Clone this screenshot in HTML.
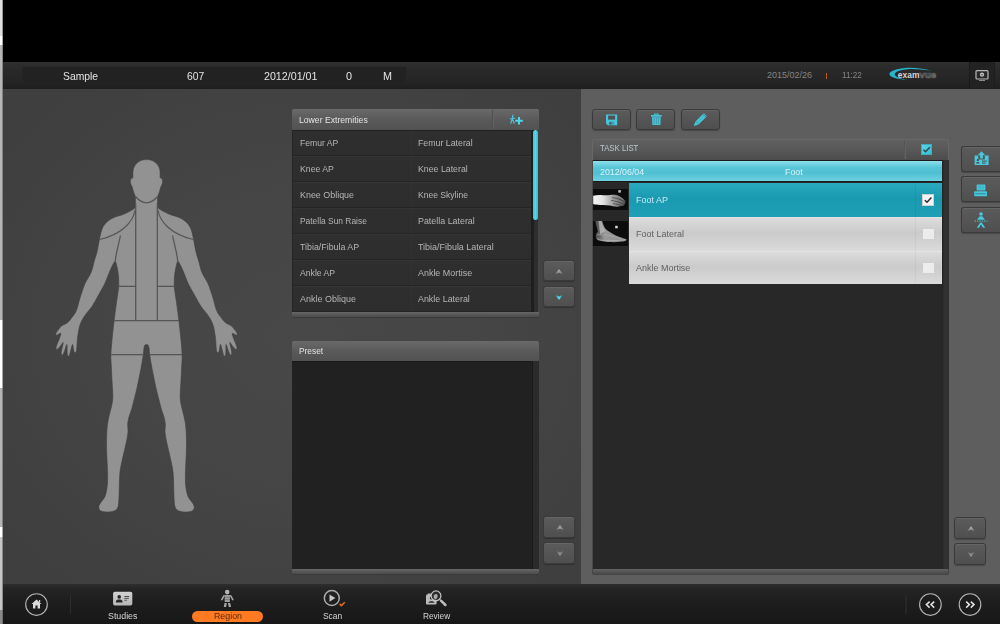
<!DOCTYPE html>
<html>
<head>
<meta charset="utf-8">
<title>Region</title>
<style>
html,body{margin:0;padding:0;}
html{width:1000px;height:624px;overflow:hidden;}
body{width:1000px;height:624px;overflow:hidden;background:#000;position:relative;font-family:"Liberation Sans",sans-serif;font-size:10px;color:#ddd;}
.abs{position:absolute;}
.sx{display:inline-block;transform-origin:0 50%;}
div{box-sizing:border-box;}
#strip{left:0;top:0;width:3px;height:624px;}
#topblack{left:3px;top:0;width:997px;height:62px;background:#000;}
#hdr{left:3px;top:62px;width:997px;height:26.5px;background:linear-gradient(#2f2f2f,#292929 30%,#252525 70%,#1e1e1e);}
#pinfo{left:22.8px;top:67.2px;width:383px;height:16.4px;background:#222;}
.ht{position:absolute;top:69.5px;font-size:11px;line-height:13px;color:#e4e4e4;white-space:nowrap;}
#leftbg{left:3px;top:89px;width:578px;height:495px;background:radial-gradient(ellipse 64% 64% at 52% 50%,#484848 0%,#454545 50%,#3f3f3f 100%);}
#rightbg{left:581px;top:89px;width:419px;height:495px;background:#5e5e5e;}
#botbar{left:3px;top:584.4px;width:997px;height:40px;background:linear-gradient(#2e2e2e,#242424 12%,#1e1e1e 45%,#171717);}
.phead{position:absolute;height:21px;background:linear-gradient(#6a6a6a,#5a5a5a 50%,#525252);border-radius:2px 2px 0 0;color:#e4e4e4;font-size:9.5px;line-height:21px;padding-left:7px;white-space:nowrap;}
.pfoot{position:absolute;height:6px;background:linear-gradient(#686868,#595959 45%,#4c4c4c);border-radius:0 0 2px 2px;border-bottom:1px solid #3a3a3a;}
.row{position:absolute;left:292px;width:239px;height:26px;background:linear-gradient(#2f2f2f,#2d2d2d);border-bottom:1px solid #252525;border-top:1px solid #343434;color:#b6b6b6;font-size:9.5px;line-height:24.5px;white-space:nowrap;}
.row i{position:absolute;left:119px;top:0;width:1px;height:24px;background:rgba(255,255,255,.018);}
.row span{position:absolute;top:0;}
.btn{position:absolute;background:linear-gradient(#5b5b5b,#4f4f4f);border:1px solid #3a3a3a;border-radius:3px;box-shadow:inset 0 1px 0 rgba(255,255,255,.07),0 1px 1px rgba(0,0,0,.25);}
.nav{position:absolute;top:610.4px;font-size:9.7px;line-height:12px;color:#d6d6d6;text-align:center;white-space:nowrap;}
</style>
</head>
<body>
<svg width="0" height="0" style="position:absolute"><defs>
<linearGradient id="gup" x1="0" y1="0" x2="0" y2="1"><stop offset="0" stop-color="#b4b4b4"/><stop offset="1" stop-color="#808080"/></linearGradient>
<linearGradient id="gdn" x1="0" y1="0" x2="0" y2="1"><stop offset="0" stop-color="#6a6a6a"/><stop offset="1" stop-color="#a8a8a8"/></linearGradient>
<linearGradient id="gdc" x1="0" y1="0" x2="0" y2="1"><stop offset="0" stop-color="#2f93a4"/><stop offset=".5" stop-color="#4fd4e8"/><stop offset="1" stop-color="#58dcf0"/></linearGradient>
</defs></svg>
<div id="topblack" class="abs"></div>
<div id="hdr" class="abs"></div>
<div id="pinfo" class="abs"></div>
<div id="leftbg" class="abs"></div>
<div id="rightbg" class="abs"></div>
<div id="botbar" class="abs"></div>

<!-- header text -->
<div class="ht" style="left:63px;"><span class="sx" style="transform:scaleX(.94)">Sample</span></div>
<div class="ht" style="left:187px;"><span class="sx" style="transform:scaleX(.94)">607</span></div>
<div class="ht" style="left:264px;"><span class="sx" style="transform:scaleX(.97)">2012/01/01</span></div>
<div class="ht" style="left:346px;"><span class="sx" style="transform:scaleX(.98)">0</span></div>
<div class="ht" style="left:383px;"><span class="sx" style="transform:scaleX(.98)">M</span></div>
<div class="ht" style="left:767px;font-size:9px;color:#858585;top:69.2px;"><span class="sx" style="transform:scaleX(1)">2015/02/26</span></div>
<div class="abs" style="left:825.6px;top:72.7px;width:1.2px;height:6.8px;background:#b8591d;"></div>
<div class="ht" style="left:842px;font-size:9px;color:#858585;top:69.2px;"><span class="sx" style="transform:scaleX(.91)">11:22</span></div>
<!-- logo -->
<svg class="abs" style="left:888px;top:66px;" width="52" height="18" viewBox="0 0 52 18">
  <defs><filter id="lb"><feGaussianBlur stdDeviation=".35"/></filter></defs>
  <path filter="url(#lb)" d="M45 5.4 C36 2.4 24 1.2 15 2.2 C6 3.4 1.4 5.6 1.4 8 C1.4 11 8 13.4 19.6 13.6 C12 12.6 6.8 10.8 6.8 8.2 C6.8 5.6 12 3.8 20 3.2 C28 2.8 38 3.8 45 5.4 Z" fill="#25b4cb"/>
  <text x="9.8" y="11.8" font-family="Liberation Sans, sans-serif" font-weight="bold" font-size="9.5" fill="#d4d4d4" textLength="21.6" lengthAdjust="spacingAndGlyphs">exam</text>
  <text x="31.6" y="11.8" font-family="Liberation Sans, sans-serif" font-weight="bold" font-size="9.5" fill="#2c2c2c" stroke="#6e6e6e" stroke-width=".7" textLength="16.6" lengthAdjust="spacingAndGlyphs">vue</text>
</svg>
<div class="abs" style="left:969px;top:62px;width:26px;height:26px;background:#222;border-left:1px solid #1a1a1a;border-right:1px solid #1d1d1d;"></div>
<svg class="abs" style="left:975px;top:69px;" width="14" height="13" viewBox="0 0 14 13">
  <rect x="1" y="1.6" width="12" height="8.4" rx="1" fill="#2a2a2a" stroke="#b8b8b8" stroke-width="1.2"/>
  <circle cx="7" cy="5.7" r="2.1" fill="#c4c4c4"/>
  <circle cx="7" cy="5.7" r=".7" fill="#333"/>
  <rect x="4" y="11" width="6" height="1" fill="#8c8c8c"/>
</svg>

<!-- Lower Extremities panel -->
<div class="abs" style="left:292px;top:130px;width:246px;height:182px;background:#1e1e1e;"></div>
<div class="abs" style="left:534px;top:130px;width:4px;height:182px;background:#2e2e2e;"></div>
<div class="phead" style="left:292px;top:109px;width:246.6px;"><span class="sx" style="transform:scaleX(.91)">Lower Extremities</span></div>
<div class="abs" style="left:492px;top:110px;width:2px;height:19px;background:#4e4e4e;border-right:1px solid #646464;"></div>
<svg class="abs" style="left:509px;top:114px;" width="16" height="12" viewBox="0 0 16 12" id="addicon">
  <g fill="none" stroke="#49c9de" stroke-width="1.15" stroke-linecap="round">
    <path d="M3.9 1 L3.5 3.6 M1.2 4.7 L5.9 4.2 M3.4 4.4 L1.8 9.2 M3.6 5.4 L5.2 9.2"/>
  </g>
  <path d="M9 3 h2 v2.7 h2.8 v2 h-2.8 v2.7 h-2 v-2.7 h-2.8 v-2 h2.8 z" fill="#4fd4e8"/>
</svg>
<div class="row" style="top:130px;border-top-color:#202020;"><i></i><span class="sx" style="left:7.5px;transform:scaleX(0.905)">Femur AP</span><span class="sx" style="left:126px;transform:scaleX(0.925)">Femur Lateral</span></div>
<div class="row" style="top:156px;"><i></i><span class="sx" style="left:7.5px;transform:scaleX(0.915)">Knee AP</span><span class="sx" style="left:126px;transform:scaleX(0.923)">Knee Lateral</span></div>
<div class="row" style="top:182px;"><i></i><span class="sx" style="left:7.5px;transform:scaleX(.938)">Knee Oblique</span><span class="sx" style="left:126px;transform:scaleX(0.9)">Knee Skyline</span></div>
<div class="row" style="top:208px;"><i></i><span class="sx" style="left:7.5px;transform:scaleX(0.885)">Patella Sun Raise</span><span class="sx" style="left:126px;transform:scaleX(0.935)">Patella Lateral</span></div>
<div class="row" style="top:234px;"><i></i><span class="sx" style="left:7.5px;transform:scaleX(0.93)">Tibia/Fibula AP</span><span class="sx" style="left:126px;transform:scaleX(0.94)">Tibia/Fibula Lateral</span></div>
<div class="row" style="top:260px;"><i></i><span class="sx" style="left:7.5px;transform:scaleX(0.909)">Ankle AP</span><span class="sx" style="left:126px;transform:scaleX(0.94)">Ankle Mortise</span></div>
<div class="row" style="top:286px;"><i></i><span class="sx" style="left:7.5px;transform:scaleX(0.945)">Ankle Oblique</span><span class="sx" style="left:126px;transform:scaleX(0.935)">Ankle Lateral</span></div>
<div class="abs" style="left:532.5px;top:130px;width:5px;height:90px;background:linear-gradient(90deg,#3fc0d6,#56d6ea 50%,#3ab4ca);border-radius:2.5px;"></div>
<div class="abs" style="left:292px;top:130px;width:1px;height:182px;background:#242424;"></div>
<div class="pfoot" style="left:292px;top:312px;width:246.6px;"></div>
<div class="btn" style="left:543px;top:259.5px;width:31.5px;height:21.5px;"></div>
<div class="btn" style="left:543px;top:285.5px;width:31.5px;height:21.5px;"></div>
<svg class="abs" style="left:554.4px;top:267.7px;" width="10" height="7" viewBox="0 0 10 7"><path d="M1.4 6 L5 1 L8.6 6 L5 4.7 Z" fill="url(#gup)"/></svg>
<svg class="abs" style="left:554.4px;top:293.6px;" width="10" height="7" viewBox="0 0 10 7"><path d="M1.4 1 L5 6 L8.6 1 L5 2.2 Z" fill="url(#gdc)"/></svg>

<!-- Preset panel -->
<div class="abs" style="left:292px;top:360px;width:246.8px;height:209px;background:#212121;border-top:2px solid #1a1a1a;"></div>
<div class="abs" style="left:532px;top:360px;width:6.8px;height:209px;background:#2b2b2b;border-left:1px solid #1b1b1b;"></div>
<div class="phead" style="left:292px;top:340.5px;width:246.8px;height:20.5px;line-height:20.5px;"><span class="sx" style="transform:scaleX(.88);margin-left:-.5px">Preset</span></div>
<div class="pfoot" style="left:292px;top:568.7px;width:246.8px;"></div>
<div class="btn" style="left:543px;top:516px;width:31.5px;height:21.5px;"></div>
<div class="btn" style="left:543px;top:542px;width:31.5px;height:21.5px;"></div>
<svg class="abs" style="left:554.6px;top:524px;" width="10" height="7" viewBox="0 0 10 7"><path d="M1.4 6 L5 1 L8.6 6 L5 4.7 Z" fill="url(#gup)"/></svg>
<svg class="abs" style="left:554.6px;top:549.8px;" width="10" height="7" viewBox="0 0 10 7"><path d="M1.4 1 L5 6 L8.6 1 L5 2.2 Z" fill="url(#gdn)"/></svg>

<!-- Task list toolbar -->
<div class="btn" style="left:592px;top:109px;width:39px;height:21px;"></div>
<div class="btn" style="left:636px;top:109px;width:39px;height:21px;"></div>
<div class="btn" style="left:680.5px;top:109px;width:39px;height:21px;"></div>
<svg class="abs" style="left:605px;top:113px;" width="13" height="13" viewBox="0 0 13 13" id="saveicon">
  <path d="M1 1.4 h11.2 v10.8 h-9.4 l-1.8 -1.8 z" fill="#47c6db"/>
  <rect x="3.1" y="2.6" width="7" height="4" fill="#505050"/>
  <rect x="3.8" y="8.6" width="5.4" height="3.2" fill="#3b9fb1"/>
  <rect x="4.6" y="9.2" width="1.7" height="2.2" fill="#505050"/>
</svg>
<svg class="abs" style="left:650px;top:112px;" width="13" height="14" viewBox="0 0 13 14" id="trashicon">
  <path d="M4.6 1.9 h3.6 v1.2 h-3.6 z" fill="none" stroke="#47c6db" stroke-width=".9"/>
  <rect x="1" y="3" width="10.8" height="1.7" rx=".4" fill="#47c6db"/>
  <path d="M2 5.2 h8.8 l-.4 7.8 h-8 z" fill="#47c6db"/>
  <path d="M4.2 6 v6.2 M6.4 6 v6.2 M8.6 6 v6.2" stroke="#3a8e9c" stroke-width=".7"/>
</svg>
<svg class="abs" style="left:693px;top:112px;" width="15" height="15" viewBox="0 0 15 15" id="penicon">
  <path d="M12.3 2.7 L4.3 10.7" stroke="#47c6db" stroke-width="4.3" fill="none"/>
  <path d="M2.6 9.3 L5.7 12.4 L.6 14.1 Z" fill="#47c6db"/>
  <path d="M11.4 3.6 L4.4 10.6" stroke="#3aa4b6" stroke-width=".7" fill="none"/>
  <path d="M9.9 2.1 L12.9 5.1" stroke="#4e4e4e" stroke-width=".6" fill="none"/>
</svg>

<!-- Task list -->
<div class="abs" style="left:592px;top:160px;width:357px;height:409px;background:#282828;border-left:1px solid #4a4a4a;"></div>
<div class="abs" style="left:941.5px;top:160px;width:7.5px;height:409px;background:linear-gradient(90deg,#242424,#333 45%,#2e2e2e);"></div>
<div class="phead" style="left:592px;top:139px;width:357px;height:21px;background:linear-gradient(#606060,#595959 45%,#4c4c4c);border:1px solid #686868;border-bottom:none;color:#b8c8cb;padding-left:7.2px;line-height:17.6px;font-size:9px;"><span class="sx" style="transform:scaleX(.865)">TASK LIST</span></div>
<div class="abs" style="left:904px;top:140px;width:2px;height:19px;background:#555;border-right:1px solid #636363;"></div>
<div class="abs" style="left:920.6px;top:144px;width:11px;height:11px;background:linear-gradient(135deg,#5ad4e6,#3bbdd3);border:1px solid #35adc2;"></div>
<svg class="abs" style="left:920.6px;top:144px;" width="11" height="11" viewBox="0 0 11 11"><path d="M2.4 5.8 L4.5 7.8 L8.8 3.2" fill="none" stroke="#33444a" stroke-width="1.4"/></svg>
<div class="pfoot" style="left:592px;top:568.7px;width:357px;background:linear-gradient(#636363,#565656 45%,#484848);border:1px solid #444;border-top:none;"></div>

<div class="abs" style="left:593px;top:160px;width:348.5px;height:22px;background:linear-gradient(#8ee0ec,#5ac6d8 30%,#4fbfd2 60%,#6ed2e2);border:1px solid #1a1a1a;border-width:1px 0 1px 0;"></div>
<div class="abs" style="left:599.6px;top:166.4px;font-size:9px;line-height:12px;color:#daf4f8;white-space:nowrap;"><span class="sx" style="transform:scaleX(.98)">2012/06/04</span></div>
<div class="abs" style="left:785px;top:166.4px;font-size:9px;line-height:12px;color:#daf4f8;white-space:nowrap;"><span class="sx" style="transform:scaleX(.98)">Foot</span></div>

<div class="abs" style="left:629px;top:183px;width:312.5px;height:34px;background:linear-gradient(#2aa9bf,#1a9ab1 45%,#1e9fb6);"></div>
<div class="abs" style="left:629px;top:217px;width:312.5px;height:34px;background:linear-gradient(#dcdcdc,#cbcbcb 45%,#d3d3d3 75%,#dbdbdb);border-top:1px solid #e4e4e4;"></div>
<div class="abs" style="left:629px;top:251px;width:312.5px;height:33px;background:linear-gradient(#dcdcdc,#cbcbcb 45%,#d3d3d3 75%,#dbdbdb);border-top:1px solid #e4e4e4;"></div>
<div class="abs" style="left:915px;top:183px;width:1px;height:34px;background:rgba(0,0,0,.05);"></div>
<div class="abs" style="left:915px;top:217px;width:1px;height:67px;background:rgba(0,0,0,.035);"></div>
<div class="abs" style="left:636px;top:193.8px;font-size:10px;line-height:12px;color:#c8eaf1;white-space:nowrap;"><span class="sx" style="transform:scaleX(.965);font-size:9.3px">Foot AP</span></div>
<div class="abs" style="left:636px;top:227.7px;font-size:10px;line-height:12px;color:#606060;white-space:nowrap;"><span class="sx" style="transform:scaleX(.965);font-size:9.3px">Foot Lateral</span></div>
<div class="abs" style="left:636px;top:261.6px;font-size:10px;line-height:12px;color:#606060;white-space:nowrap;"><span class="sx" style="transform:scaleX(.965);font-size:9.3px">Ankle Mortise</span></div>
<div class="abs" style="left:922px;top:194px;width:12px;height:12px;background:#f4f4f4;border:1px solid #d0d0d0;"></div>
<svg class="abs" style="left:922px;top:194px;" width="12" height="12" viewBox="0 0 12 12"><path d="M2.8 6.2 L5 8.3 L9.4 3.6" fill="none" stroke="#2c2c2c" stroke-width="1.5"/></svg>
<div class="abs" style="left:923px;top:229px;width:10.6px;height:10.2px;background:#ececec;"></div>
<div class="abs" style="left:923px;top:263px;width:10.6px;height:10.2px;background:#ececec;"></div>


<!-- thumbnails -->
<svg class="abs" style="left:593px;top:189px;" width="35" height="21" viewBox="0 0 35 21" id="thumb1">
  <defs>
    <filter id="b1" x="-20%" y="-20%" width="140%" height="140%"><feGaussianBlur stdDeviation=".65"/></filter>
    <linearGradient id="g1" x1="0" x2="1"><stop offset="0" stop-color="#f6f6f6"/><stop offset=".3" stop-color="#e2e2e2"/><stop offset=".55" stop-color="#ababab"/><stop offset=".8" stop-color="#7a7a7a"/><stop offset="1" stop-color="#5a5a5a"/></linearGradient>
  </defs>
  <rect width="35" height="21" fill="#0c0c0c"/>
  <g filter="url(#b1)">
    <path d="M0.2 6.8 C3 6 6 5.7 10 6.2 C15 6.8 18 5.5 22 5.8 C26 6.4 30 9 32.8 12.4 C31.4 13.6 32 15.5 30.7 16.6 C27 17.8 23 18 20 17.2 C16 16 11 16.6 7 16 C4 15.8 2 15.6 0.2 15 Z" fill="url(#g1)"/>
    <path d="M19 8.6 C24 9 28 10.6 32 13 M18 11.4 C23 12 27 13.4 31 15.4 M20 14.6 C24 15 27 16 29 17" stroke="#1c1c1c" stroke-width=".7" fill="none" opacity=".75"/>
    <path d="M22 6.6 C25 7 28 8.6 30.6 11" stroke="#999" stroke-width=".6" fill="none"/>
  </g>
  <rect x="25.3" y="1.1" width="2.6" height="2.5" fill="#bdbdbd" filter="url(#b1)"/>
</svg>
<svg class="abs" style="left:593px;top:221px;" width="35" height="25" viewBox="0 0 35 25" id="thumb2">
  <defs>
    <filter id="b2" x="-20%" y="-20%" width="140%" height="140%"><feGaussianBlur stdDeviation=".7"/></filter>
    <linearGradient id="g2" x1="0" x2="1"><stop offset="0" stop-color="#4a4a4a"/><stop offset=".16" stop-color="#6e6e6e"/><stop offset=".3" stop-color="#9a9a9a"/><stop offset="1" stop-color="#8a8a8a"/></linearGradient>
  </defs>
  <rect width="35" height="25" fill="#0c0c0c"/>
  <g filter="url(#b2)">
    <path d="M2.3 0 L9.2 0 C9.6 1.6 10 3 10.5 4 C11.2 5.8 12 7.2 12.9 8.2 C15 10 17 11.2 19.2 12.4 C21.6 13.8 24 15 26.6 16.1 C29 17 31.6 17.6 33.5 18.2 C33.6 19.2 33 19.8 32 20 C30.8 20.4 29.8 20.6 28.7 20.6 C25 21 21.6 21.2 18.2 21.1 C13.6 21 9 20.4 4.9 19.3 C3.6 18.6 2.9 17.4 2.8 16.1 C2.7 15 2.8 13.9 3.1 12.9 C3.5 12 4.2 11.4 4.9 10.8 C4.6 8.8 4 6.8 3.5 5 C3 3.2 2.6 1.6 2.3 0 Z" fill="url(#g2)"/>
    <path d="M5.6 0 L8.6 0 C9.2 3.4 10.2 6.8 12 9.4 C10.6 11 8.8 12.6 7.2 13.6 C6.6 9 6.2 4.4 5.6 0 Z" fill="#b8b8b8" opacity=".8"/>
    <path d="M4 17.4 C6 19.4 12 19.8 18 19.6 C23 19.6 28 19.4 32.6 18.8" stroke="#b4b4b4" stroke-width=".8" fill="none"/>
    <path d="M10 13.4 C15 14 21 15.6 28 17.6" stroke="#b0b0b0" stroke-width=".8" fill="none" opacity=".8"/>
    <path d="M4 14 C6 13 9 13.6 11 15.4" stroke="#a8a8a8" stroke-width=".8" fill="none" opacity=".8"/>
  </g>
  <rect x="22.2" y="4.8" width="2.5" height="2.5" fill="#dadada" filter="url(#b2)"/>
</svg>
<!-- right side buttons -->
<div class="btn" style="left:961px;top:146px;width:39px;height:26px;border-right:none;border-radius:3px 0 0 3px;"></div>
<div class="btn" style="left:961px;top:176px;width:39px;height:26px;border-right:none;border-radius:3px 0 0 3px;"></div>
<div class="btn" style="left:961px;top:207px;width:39px;height:26px;border-right:none;border-radius:3px 0 0 3px;"></div>
<div class="btn" style="left:954px;top:516.6px;width:32px;height:22px;"></div>
<div class="btn" style="left:954px;top:543px;width:32px;height:22px;"></div>
<svg class="abs" style="left:965.5px;top:524.6px;" width="10" height="7" viewBox="0 0 10 7"><path d="M1.4 6 L5 1 L8.6 6 L5 4.7 Z" fill="url(#gup)"/></svg>
<svg class="abs" style="left:965.5px;top:550.8px;" width="10" height="7" viewBox="0 0 10 7"><path d="M1.4 1 L5 6 L8.6 1 L5 2.2 Z" fill="url(#gdn)"/></svg>


<svg class="abs" style="left:972px;top:149px;" width="20" height="18" viewBox="972 149 20 18" id="sideicon1">
  <path d="M981.5 151.2 L985.2 155.2 L982.9 155.2 L982.9 158.6 L980.1 158.6 L980.1 155.2 L977.8 155.2 Z" fill="#48c8dc"/>
  <path d="M974.6 155.6 h3.6 v3.8 h6.6 v-3.8 h3.8 v9.4 h-14 z" fill="#48c8dc"/>
  <circle cx="977.8" cy="160.2" r="1.1" fill="#4d4d4d"/>
  <path d="M976 163.6 c0 -2 3.6 -2 3.6 0 z" fill="#4d4d4d"/>
  <rect x="982" y="160.6" width="4.8" height="1" fill="#4d4d4d"/>
  <rect x="982" y="162.6" width="3.6" height="1" fill="#4d4d4d"/>
</svg>
<svg class="abs" style="left:972px;top:182px;" width="18" height="16" viewBox="972 182 18 16" id="sideicon2">
  <rect x="976.6" y="184.6" width="8.8" height="6" rx=".8" fill="#48c8dc"/>
  <rect x="977.8" y="185.6" width="6.4" height="4" fill="#3fb4c8"/>
  <path d="M977.8 187 h6.4 M977.8 188.4 h6.4" stroke="#48c8dc" stroke-width=".5"/>
  <rect x="974.2" y="191.2" width="12.8" height="5" rx=".8" fill="#48c8dc"/>
  <rect x="975.4" y="193" width="10.4" height="1.4" fill="#3a98a8"/>
</svg>
<svg class="abs" style="left:972px;top:211px;" width="18" height="18" viewBox="972 211 18 18" id="sideicon3">
  <circle cx="981" cy="214" r="1.8" fill="#48c8dc"/>
  <path d="M979.8 216.2 h2.4 l2.8 3.6 h-8 z" fill="#48c8dc"/>
  <path d="M974.6 221.1 h13" stroke="#48c8dc" stroke-width="1" stroke-dasharray="1.4 1"/>
  <path d="M980.2 222.4 h1.6 l3.4 5.4 h-2.2 l-2 -3.4 l-2 3.4 h-2.2 z" fill="#48c8dc"/>
</svg>
<!-- bottom bar -->
<svg class="abs" style="left:20px;top:588px;" width="60" height="34" viewBox="20 588 60 34">
  <circle cx="36.5" cy="604.5" r="10.8" fill="#1c1c1c" stroke="#b2b2b2" stroke-width="1.15"/>
  <path d="M36.5 599.4 L41.4 604 L40 604 L40 608.6 L37.6 608.6 L37.6 605.6 L35.4 605.6 L35.4 608.6 L33 608.6 L33 604 L31.6 604 Z" fill="#dcdcdc"/>
  <rect x="39" y="600" width="1.2" height="2.2" fill="#dcdcdc"/>
  <rect x="70" y="595" width="1" height="19" fill="#2e2e2e"/>
</svg>
<svg class="abs" style="left:112px;top:591px;" width="22" height="16" viewBox="0 0 22 16" id="cardicon">
  <defs><linearGradient id="cg" x1="0" y1="0" x2="0" y2="1"><stop offset="0" stop-color="#d2d2d2"/><stop offset="1" stop-color="#b6b6b6"/></linearGradient></defs>
  <rect x="1.1" y=".8" width="19.2" height="13.7" rx="1.8" fill="url(#cg)"/>
  <circle cx="7.2" cy="5.9" r="1.8" fill="#262626"/>
  <path d="M3.8 11.4 C3.8 9 5.4 8.6 7.2 8.6 C9 8.6 10.6 9 10.6 11.4 Z" fill="#262626"/>
  <rect x="12.4" y="5" width="4.8" height=".9" fill="#3c3c3c"/>
  <rect x="12.4" y="6.9" width="4.4" height=".9" fill="#444"/>
  <rect x="12.4" y="8.8" width="2.4" height=".9" fill="#444"/>
</svg>
<div class="nav" style="left:108px;"><span class="sx" style="transform:scaleX(.91)">Studies</span></div>
<div class="abs" style="left:192px;top:611px;width:71px;height:11px;border-radius:6px;background:#ff7a20;"></div>
<div class="nav" style="left:214px;color:#5a2a06;"><span class="sx" style="transform:scaleX(.91)">Region</span></div>
<svg class="abs" style="left:219px;top:588px;" width="16" height="20" viewBox="219 588 16 20" id="personicon">
  <defs><filter id="pb"><feGaussianBlur stdDeviation=".3"/></filter></defs>
  <g filter="url(#pb)">
  <circle cx="227.2" cy="592.1" r="2.3" fill="#b2b2b2"/>
  <path d="M224.7 595 h5.2 v7 h-5.2 z" fill="#a0a0a0"/>
  <path d="M224.7 597.3 h5.2 M224.7 599.6 h5.2" stroke="#5c5c5c" stroke-width=".6"/>
  <path d="M223.9 595.8 L221.8 599.6 M230.7 595.8 L232.8 599.6" stroke="#a2a2a2" stroke-width="1.7" stroke-linecap="round"/>
  <path d="M224.5 602.9 h2.3 l-.7 4 h-2.3 z M227.9 602.9 h2.3 l.9 4 h-2.3 z" fill="#a6a6a6"/>
  </g>
</svg>
<svg class="abs" style="left:321px;top:588px;" width="26" height="20" viewBox="321 588 26 20" id="scanicon">
  <circle cx="331.8" cy="598" r="7.5" fill="none" stroke="#ababab" stroke-width="1.5"/>
  <path d="M329.5 594.5 L335.4 598.1 L329.5 601.8 Z" fill="#c6c6c6"/>
  <path d="M339.6 603.9 L341.4 605.6 L344.8 602.2" fill="none" stroke="#e46c1c" stroke-width="1.5"/>
</svg>
<div class="nav" style="left:323px;"><span class="sx" style="transform:scaleX(.865)">Scan</span></div>
<svg class="abs" style="left:424px;top:588px;" width="24" height="20" viewBox="424 588 24 20" id="reviewicon">
  <rect x="426" y="594.6" width="10.6" height="10" rx="1.4" fill="#bcbcbc"/>
  <rect x="427.6" y="593.4" width="3.4" height="2" rx=".6" fill="#bcbcbc"/>
  <circle cx="431.4" cy="598" r="1.6" fill="#262626"/>
  <path d="M428.2 602.8 C428.2 600.6 434.6 600.6 434.6 602.8 Z" fill="#262626"/>
  <circle cx="436" cy="595.8" r="4.9" fill="#2b2b2b" stroke="#c4c4c4" stroke-width="1.2"/>
  <path d="M433.6 596.6 C433.6 593.6 437.4 593 437.6 595.6 C437.8 597.6 436.6 599.4 435.2 599.6 C434.2 599 433.6 598 433.6 596.6 Z" fill="#a8a8a8"/>
  <path d="M439.6 599.4 L441.2 601" stroke="#c4c4c4" stroke-width="1.2"/>
  <path d="M441.2 600.8 L445.4 605" stroke="#bdbdbd" stroke-width="2.5" stroke-linecap="round"/>
</svg>
<div class="nav" style="left:423px;"><span class="sx" style="transform:scaleX(.855)">Review</span></div>
<svg class="abs" style="left:900px;top:590px;" width="90" height="30" viewBox="900 590 90 30">
  <rect x="905.5" y="595" width="1" height="19" fill="#303030"/>
  <circle cx="930.4" cy="604.5" r="10.8" fill="#1c1c1c" stroke="#b2b2b2" stroke-width="1.15"/>
  <circle cx="970" cy="604.5" r="10.8" fill="#1c1c1c" stroke="#b2b2b2" stroke-width="1.15"/>
  <path d="M929.6 601.6 L926.4 604.6 L929.6 607.6 M934.2 601.6 L931 604.6 L934.2 607.6" fill="none" stroke="#e6e6e6" stroke-width="1.5"/>
  <path d="M966.2 601.6 L969.4 604.6 L966.2 607.6 M970.8 601.6 L974 604.6 L970.8 607.6" fill="none" stroke="#e6e6e6" stroke-width="1.5"/>
</svg>
<!--BODY-->
<svg class="abs" id="bodyfig" style="left:40px;top:150px;" width="220" height="370" viewBox="40 150 220 370">
  <defs><filter id="bb" x="-5%" y="-5%" width="110%" height="110%"><feGaussianBlur stdDeviation=".45"/></filter></defs>
  <g filter="url(#bb)">
  <path d="M146.50 159.60 C144.67 159.60 142.67 159.75 141.00 160.40 C139.33 161.05 137.73 162.23 136.50 163.50 C135.27 164.77 134.20 166.42 133.60 168.00 C133.00 169.58 133.03 171.42 132.90 173.00 C132.77 174.58 133.08 176.57 132.80 177.50 C132.52 178.43 131.62 177.93 131.20 178.60 C130.78 179.27 130.30 180.43 130.30 181.50 C130.30 182.57 130.85 184.00 131.20 185.00 C131.55 186.00 132.03 186.42 132.40 187.50 C132.77 188.58 133.00 190.25 133.40 191.50 C133.80 192.75 134.47 193.92 134.80 195.00 C135.13 196.08 135.30 196.67 135.40 198.00 C135.50 199.33 135.43 201.42 135.40 203.00 C135.37 204.58 135.93 206.23 135.20 207.50 C134.47 208.77 132.95 209.47 131.00 210.60 C129.05 211.73 126.52 213.08 123.50 214.30 C120.48 215.52 115.70 216.57 112.90 217.90 C110.10 219.23 108.47 220.55 106.70 222.30 C104.93 224.05 103.47 225.78 102.30 228.40 C101.13 231.02 100.58 234.07 99.70 238.00 C98.82 241.93 97.95 248.00 97.00 252.00 C96.05 256.00 94.93 258.72 94.00 262.00 C93.07 265.28 92.48 268.87 91.40 271.70 C90.32 274.53 88.67 276.78 87.50 279.00 C86.33 281.22 85.65 281.83 84.40 285.00 C83.15 288.17 81.33 293.75 80.00 298.00 C78.67 302.25 77.75 307.25 76.40 310.50 C75.05 313.75 73.40 315.45 71.90 317.50 C70.40 319.55 69.08 321.42 67.40 322.80 C65.72 324.18 63.28 324.68 61.80 325.80 C60.32 326.92 59.48 328.23 58.50 329.50 C57.52 330.77 56.22 332.45 55.90 333.40 C55.58 334.35 55.80 335.20 56.60 335.20 C57.40 335.20 60.20 332.93 60.70 333.40 C61.20 333.87 60.32 335.90 59.60 338.00 C58.88 340.10 56.97 344.20 56.40 346.00 C55.83 347.80 56.00 348.27 56.20 348.80 C56.40 349.33 56.88 349.67 57.60 349.20 C58.32 348.73 59.57 347.12 60.50 346.00 C61.43 344.88 63.02 341.83 63.20 342.50 C63.38 343.17 61.92 348.08 61.60 350.00 C61.28 351.92 61.13 353.17 61.30 354.00 C61.47 354.83 62.08 355.42 62.60 355.00 C63.12 354.58 63.68 353.25 64.40 351.50 C65.12 349.75 66.45 344.58 66.90 344.50 C67.35 344.42 66.98 349.18 67.10 351.00 C67.22 352.82 67.25 354.60 67.60 355.40 C67.95 356.20 68.70 356.53 69.20 355.80 C69.70 355.07 70.05 352.88 70.60 351.00 C71.15 349.12 72.00 344.67 72.50 344.50 C73.00 344.33 73.25 348.65 73.60 350.00 C73.95 351.35 74.17 352.30 74.60 352.60 C75.03 352.90 75.82 352.73 76.20 351.80 C76.58 350.87 76.73 348.63 76.90 347.00 C77.07 345.37 77.05 343.83 77.20 342.00 C77.35 340.17 77.43 338.50 77.80 336.00 C78.17 333.50 78.70 329.63 79.40 327.00 C80.10 324.37 80.90 322.37 82.00 320.20 C83.10 318.03 84.28 316.37 86.00 314.00 C87.72 311.63 90.22 309.17 92.30 306.00 C94.38 302.83 96.45 298.67 98.50 295.00 C100.55 291.33 102.70 288.00 104.60 284.00 C106.50 280.00 108.47 274.33 109.90 271.00 C111.33 267.67 112.30 265.58 113.20 264.00 C114.10 262.42 114.67 261.00 115.30 261.50 C115.93 262.00 116.48 264.70 117.00 267.00 C117.52 269.30 118.10 272.30 118.40 275.30 C118.70 278.30 118.88 282.05 118.80 285.00 C118.72 287.95 118.37 289.50 117.90 293.00 C117.43 296.50 116.60 301.62 116.00 306.00 C115.40 310.38 114.88 314.47 114.30 319.30 C113.72 324.13 113.07 329.22 112.50 335.00 C111.93 340.78 111.10 348.83 110.90 354.00 C110.70 359.17 111.12 361.58 111.30 366.00 C111.48 370.42 111.75 375.67 112.00 380.50 C112.25 385.33 112.77 391.25 112.80 395.00 C112.83 398.75 112.62 400.33 112.20 403.00 C111.78 405.67 110.97 408.17 110.30 411.00 C109.63 413.83 108.73 417.17 108.20 420.00 C107.67 422.83 107.38 424.67 107.10 428.00 C106.82 431.33 106.57 435.67 106.50 440.00 C106.43 444.33 106.55 449.33 106.70 454.00 C106.85 458.67 107.25 463.58 107.40 468.00 C107.55 472.42 107.70 477.00 107.60 480.50 C107.50 484.00 107.23 486.35 106.80 489.00 C106.37 491.65 105.88 494.32 105.00 496.40 C104.12 498.48 102.52 499.90 101.50 501.50 C100.48 503.10 99.25 504.65 98.90 506.00 C98.55 507.35 98.80 508.67 99.40 509.60 C100.00 510.53 101.13 511.20 102.50 511.60 C103.87 512.00 105.93 512.03 107.60 512.00 C109.27 511.97 111.03 511.80 112.50 511.40 C113.97 511.00 115.42 510.67 116.40 509.60 C117.38 508.53 117.95 507.50 118.40 505.00 C118.85 502.50 118.93 498.27 119.10 494.60 C119.27 490.93 119.25 486.82 119.40 483.00 C119.55 479.18 119.57 475.37 120.00 471.70 C120.43 468.03 121.27 464.53 122.00 461.00 C122.73 457.47 123.63 453.83 124.40 450.50 C125.17 447.17 126.02 443.93 126.60 441.00 C127.18 438.07 127.68 435.07 127.90 432.90 C128.12 430.73 127.93 429.48 127.90 428.00 C127.87 426.52 127.52 425.83 127.70 424.00 C127.88 422.17 128.38 419.33 129.00 417.00 C129.62 414.67 130.57 412.83 131.40 410.00 C132.23 407.17 133.12 403.45 134.00 400.00 C134.88 396.55 135.78 393.30 136.70 389.30 C137.62 385.30 138.62 380.40 139.50 376.00 C140.38 371.60 141.33 366.73 142.00 362.90 C142.67 359.07 143.17 355.48 143.50 353.00 C143.83 350.52 143.78 349.30 144.00 348.00 C144.22 346.70 144.38 345.80 144.80 345.20 C145.22 344.60 145.93 344.40 146.50 344.40 C147.07 344.40 147.78 344.60 148.20 345.20 C148.62 345.80 148.78 346.70 149.00 348.00 C149.22 349.30 149.17 350.52 149.50 353.00 C149.83 355.48 150.33 359.07 151.00 362.90 C151.67 366.73 152.62 371.60 153.50 376.00 C154.38 380.40 155.38 385.30 156.30 389.30 C157.22 393.30 158.12 396.55 159.00 400.00 C159.88 403.45 160.77 407.17 161.60 410.00 C162.43 412.83 163.38 414.67 164.00 417.00 C164.62 419.33 165.12 422.17 165.30 424.00 C165.48 425.83 165.13 426.52 165.10 428.00 C165.07 429.48 164.88 430.73 165.10 432.90 C165.32 435.07 165.82 438.07 166.40 441.00 C166.98 443.93 167.83 447.17 168.60 450.50 C169.37 453.83 170.27 457.47 171.00 461.00 C171.73 464.53 172.57 468.03 173.00 471.70 C173.43 475.37 173.45 479.18 173.60 483.00 C173.75 486.82 173.73 490.93 173.90 494.60 C174.07 498.27 174.15 502.50 174.60 505.00 C175.05 507.50 175.62 508.53 176.60 509.60 C177.58 510.67 179.03 511.00 180.50 511.40 C181.97 511.80 183.73 511.97 185.40 512.00 C187.07 512.03 189.13 512.00 190.50 511.60 C191.87 511.20 193.00 510.53 193.60 509.60 C194.20 508.67 194.45 507.35 194.10 506.00 C193.75 504.65 192.52 503.10 191.50 501.50 C190.48 499.90 188.88 498.48 188.00 496.40 C187.12 494.32 186.63 491.65 186.20 489.00 C185.77 486.35 185.50 484.00 185.40 480.50 C185.30 477.00 185.45 472.42 185.60 468.00 C185.75 463.58 186.15 458.67 186.30 454.00 C186.45 449.33 186.57 444.33 186.50 440.00 C186.43 435.67 186.18 431.33 185.90 428.00 C185.62 424.67 185.33 422.83 184.80 420.00 C184.27 417.17 183.37 413.83 182.70 411.00 C182.03 408.17 181.22 405.67 180.80 403.00 C180.38 400.33 180.17 398.75 180.20 395.00 C180.23 391.25 180.75 385.33 181.00 380.50 C181.25 375.67 181.52 370.42 181.70 366.00 C181.88 361.58 182.30 359.17 182.10 354.00 C181.90 348.83 181.07 340.78 180.50 335.00 C179.93 329.22 179.28 324.13 178.70 319.30 C178.12 314.47 177.60 310.38 177.00 306.00 C176.40 301.62 175.57 296.50 175.10 293.00 C174.63 289.50 174.28 287.95 174.20 285.00 C174.12 282.05 174.30 278.30 174.60 275.30 C174.90 272.30 175.48 269.30 176.00 267.00 C176.52 264.70 177.07 262.00 177.70 261.50 C178.33 261.00 178.90 262.42 179.80 264.00 C180.70 265.58 181.67 267.67 183.10 271.00 C184.53 274.33 186.50 280.00 188.40 284.00 C190.30 288.00 192.45 291.33 194.50 295.00 C196.55 298.67 198.62 302.83 200.70 306.00 C202.78 309.17 205.28 311.63 207.00 314.00 C208.72 316.37 209.90 318.03 211.00 320.20 C212.10 322.37 212.90 324.37 213.60 327.00 C214.30 329.63 214.83 333.50 215.20 336.00 C215.57 338.50 215.65 340.17 215.80 342.00 C215.95 343.83 215.93 345.37 216.10 347.00 C216.27 348.63 216.42 350.87 216.80 351.80 C217.18 352.73 217.97 352.90 218.40 352.60 C218.83 352.30 219.05 351.35 219.40 350.00 C219.75 348.65 220.00 344.33 220.50 344.50 C221.00 344.67 221.85 349.12 222.40 351.00 C222.95 352.88 223.30 355.07 223.80 355.80 C224.30 356.53 225.05 356.20 225.40 355.40 C225.75 354.60 225.78 352.82 225.90 351.00 C226.02 349.18 225.65 344.42 226.10 344.50 C226.55 344.58 227.88 349.75 228.60 351.50 C229.32 353.25 229.88 354.58 230.40 355.00 C230.92 355.42 231.53 354.83 231.70 354.00 C231.87 353.17 231.72 351.92 231.40 350.00 C231.08 348.08 229.62 343.17 229.80 342.50 C229.98 341.83 231.57 344.88 232.50 346.00 C233.43 347.12 234.68 348.73 235.40 349.20 C236.12 349.67 236.60 349.33 236.80 348.80 C237.00 348.27 237.17 347.80 236.60 346.00 C236.03 344.20 234.12 340.10 233.40 338.00 C232.68 335.90 231.80 333.87 232.30 333.40 C232.80 332.93 235.60 335.20 236.40 335.20 C237.20 335.20 237.42 334.35 237.10 333.40 C236.78 332.45 235.48 330.77 234.50 329.50 C233.52 328.23 232.68 326.92 231.20 325.80 C229.72 324.68 227.28 324.18 225.60 322.80 C223.92 321.42 222.60 319.55 221.10 317.50 C219.60 315.45 217.95 313.75 216.60 310.50 C215.25 307.25 214.33 302.25 213.00 298.00 C211.67 293.75 209.85 288.17 208.60 285.00 C207.35 281.83 206.67 281.22 205.50 279.00 C204.33 276.78 202.68 274.53 201.60 271.70 C200.52 268.87 199.93 265.28 199.00 262.00 C198.07 258.72 196.95 256.00 196.00 252.00 C195.05 248.00 194.18 241.93 193.30 238.00 C192.42 234.07 191.87 231.02 190.70 228.40 C189.53 225.78 188.07 224.05 186.30 222.30 C184.53 220.55 182.90 219.23 180.10 217.90 C177.30 216.57 172.52 215.52 169.50 214.30 C166.48 213.08 163.95 211.73 162.00 210.60 C160.05 209.47 158.53 208.77 157.80 207.50 C157.07 206.23 157.63 204.58 157.60 203.00 C157.57 201.42 157.50 199.33 157.60 198.00 C157.70 196.67 157.87 196.08 158.20 195.00 C158.53 193.92 159.20 192.75 159.60 191.50 C160.00 190.25 160.23 188.58 160.60 187.50 C160.97 186.42 161.45 186.00 161.80 185.00 C162.15 184.00 162.70 182.57 162.70 181.50 C162.70 180.43 162.22 179.27 161.80 178.60 C161.38 177.93 160.48 178.43 160.20 177.50 C159.92 176.57 160.23 174.58 160.10 173.00 C159.97 171.42 160.00 169.58 159.40 168.00 C158.80 166.42 157.73 164.77 156.50 163.50 C155.27 162.23 153.67 161.05 152.00 160.40 C150.33 159.75 148.33 159.60 146.50 159.60 Z" fill="#929292" stroke="#3e3e3e" stroke-width=".6"/>
  <path d="M135.4 196.5 Q146.5 209 157.6 196.5 M135.7 203 L135.7 320.6 M157.3 203 L157.3 320.6 M135.2 210 C133 222 122 234 99.8 239.5 M157.8 210 C160.0 222 171.0 234 193.2 239.5 M120.4 235.5 C119 244 116 252 115.2 261.5 M172.6 235.5 C174.0 244 177.0 252 177.8 261.5 M118.8 286.4 L135.7 286.4 M174.2 286.4 L157.3 286.4 M114.3 320.6 L178.7 320.6 M110.9 354.6 L143.3 354.6 M182.1 354.6 L149.7 354.6" fill="none" stroke="#555" stroke-width="1.25"/>
  </g>
</svg>
<!--/BODY-->
<div id="strip" class="abs"><div class="abs" style="left:0;top:0px;width:3px;height:36px;background:linear-gradient(90deg,#e0e0e0 0,#e0e0e0 2px,rgba(90,90,90,.9) 3px);"></div><div class="abs" style="left:0;top:36px;width:3px;height:9px;background:linear-gradient(90deg,#ffffff 0,#ffffff 2px,rgba(90,90,90,.9) 3px);"></div><div class="abs" style="left:0;top:45px;width:3px;height:275px;background:linear-gradient(90deg,#b6b6b6 0,#b6b6b6 2px,rgba(90,90,90,.9) 3px);"></div><div class="abs" style="left:0;top:320px;width:3px;height:68px;background:linear-gradient(90deg,#ffffff 0,#ffffff 2px,rgba(90,90,90,.9) 3px);"></div><div class="abs" style="left:0;top:388px;width:3px;height:139px;background:linear-gradient(90deg,#b6b6b6 0,#b6b6b6 2px,rgba(90,90,90,.9) 3px);"></div><div class="abs" style="left:0;top:527px;width:3px;height:10px;background:linear-gradient(90deg,#ffffff 0,#ffffff 2px,rgba(90,90,90,.9) 3px);"></div><div class="abs" style="left:0;top:537px;width:3px;height:73px;background:linear-gradient(90deg,#c6c6c6 0,#c6c6c6 2px,rgba(90,90,90,.9) 3px);"></div><div class="abs" style="left:0;top:610px;width:3px;height:14px;background:linear-gradient(90deg,#8a8a8a 0,#8a8a8a 2px,rgba(90,90,90,.9) 3px);"></div></div>
</body>
</html>
